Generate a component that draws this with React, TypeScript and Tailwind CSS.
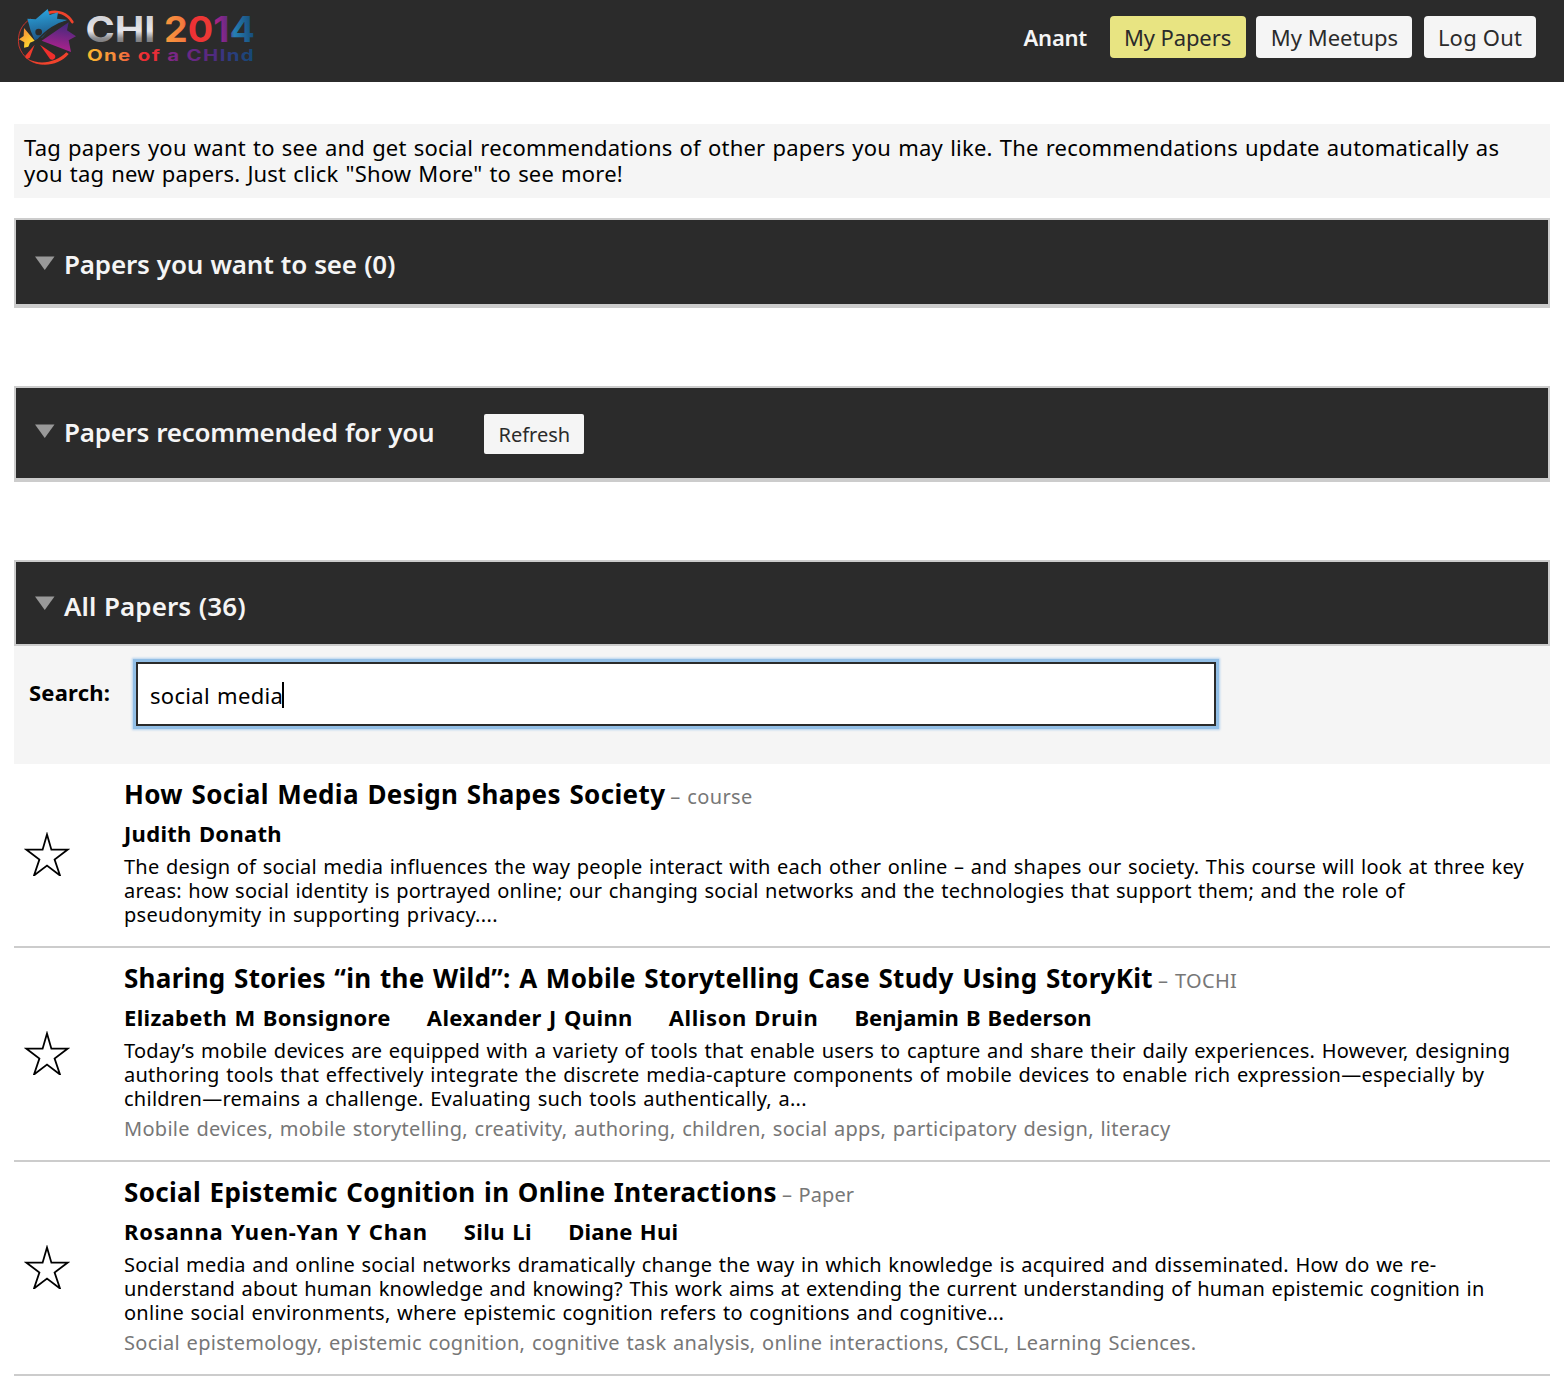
import type { ReactNode } from 'react';

type Line = { text: string; track: string };
type Paper = {
  title: Line;
  kind: Line;
  authors: Line[];
  abstract: Line[];
  keywords?: Line;
};

const papers: Paper[] = [
  {
    title: { text: 'How Social Media Design Shapes Society', track: 'tracking-[0.364px]' },
    kind: { text: '– course', track: 'tracking-[0.35px]' },
    authors: [{ text: 'Judith Donath', track: 'tracking-[0.3px]' }],
    abstract: [
      { text: 'The design of social media influences the way people interact with each other online – and shapes our society. This course will look at three key', track: 'tracking-[0.22px]' },
      { text: 'areas: how social identity is portrayed online; our changing social networks and the technologies that support them; and the role of', track: 'tracking-[0.2px]' },
      { text: 'pseudonymity in supporting privacy....', track: 'tracking-[0.32px]' },
    ],
  },
  {
    title: { text: 'Sharing Stories “in the Wild”: A Mobile Storytelling Case Study Using StoryKit', track: 'tracking-[0.292px]' },
    kind: { text: '– TOCHI', track: 'tracking-[0.35px]' },
    authors: [
      { text: 'Elizabeth M Bonsignore', track: 'tracking-[0.32px]' },
      { text: 'Alexander J Quinn', track: 'tracking-[0.38px]' },
      { text: 'Allison Druin', track: 'tracking-[0.58px]' },
      { text: 'Benjamin B Bederson', track: 'tracking-[0.05px]' },
    ],
    abstract: [
      { text: 'Today’s mobile devices are equipped with a variety of tools that enable users to capture and share their daily experiences. However, designing', track: 'tracking-[0.25px]' },
      { text: 'authoring tools that effectively integrate the discrete media-capture components of mobile devices to enable rich expression—especially by', track: 'tracking-[0.257px]' },
      { text: 'children—remains a challenge. Evaluating such tools authentically, a...', track: 'tracking-[0.26px]' },
    ],
    keywords: { text: 'Mobile devices, mobile storytelling, creativity, authoring, children, social apps, participatory design, literacy', track: 'tracking-[0.292px]' },
  },
  {
    title: { text: 'Social Epistemic Cognition in Online Interactions', track: 'tracking-[0.335px]' },
    kind: { text: '– Paper', track: 'tracking-[0.1px]' },
    authors: [
      { text: 'Rosanna Yuen-Yan Y Chan', track: 'tracking-[0.74px]' },
      { text: 'Silu Li', track: 'tracking-[0.44px]' },
      { text: 'Diane Hui', track: 'tracking-[0.25px]' },
    ],
    abstract: [
      { text: 'Social media and online social networks dramatically change the way in which knowledge is acquired and disseminated. How do we re-', track: 'tracking-[0.216px]' },
      { text: 'understand about human knowledge and knowing? This work aims at extending the current understanding of human epistemic cognition in', track: 'tracking-[0.187px]' },
      { text: 'online social environments, where epistemic cognition refers to cognitions and cognitive...', track: 'tracking-[0.255px]' },
    ],
    keywords: { text: 'Social epistemology, epistemic cognition, cognitive task analysis, online interactions, CSCL, Learning Sciences.', track: 'tracking-[0.298px]' },
  },
];

function Logo() {
  return (
    <svg width="240" height="62" viewBox="0 0 240 62" className="block" role="img" aria-label="CHI 2014 One of a CHInd">
      <defs>
        <linearGradient id="silver" x1="0" y1="0" x2="0" y2="1">
          <stop offset="0.25" stopColor="#d4d4d8" />
          <stop offset="0.55" stopColor="#e6e6ec" />
          <stop offset="0.72" stopColor="#8d8d90" />
          <stop offset="0.85" stopColor="#77777a" />
        </linearGradient>
        <linearGradient id="year" gradientUnits="userSpaceOnUse" x1="149" y1="36" x2="238" y2="28">
          <stop offset="0" stopColor="#f79a3c" />
          <stop offset="0.22" stopColor="#f47b3e" />
          <stop offset="0.3" stopColor="#ee3035" />
          <stop offset="0.52" stopColor="#ec3a35" />
          <stop offset="0.6" stopColor="#a3238a" />
          <stop offset="0.7" stopColor="#6b2a86" />
          <stop offset="0.78" stopColor="#2580b4" />
          <stop offset="1" stopColor="#184a78" />
        </linearGradient>
        <linearGradient id="tagline" gradientUnits="userSpaceOnUse" x1="72" y1="0" x2="238" y2="0">
          <stop offset="0" stopColor="#fcb92f" />
          <stop offset="0.2" stopColor="#f47d3e" />
          <stop offset="0.34" stopColor="#ec2a33" />
          <stop offset="0.44" stopColor="#e22f3a" />
          <stop offset="0.5" stopColor="#7d2788" />
          <stop offset="0.75" stopColor="#54297f" />
          <stop offset="0.84" stopColor="#2f3a80" />
          <stop offset="1" stopColor="#164a76" />
        </linearGradient>
        <linearGradient id="sky" x1="0.4" y1="0" x2="0.6" y2="1">
          <stop offset="0" stopColor="#2ba5de" />
          <stop offset="1" stopColor="#1d4d7c" />
        </linearGradient>
        <linearGradient id="violet" x1="0.6" y1="0" x2="0.4" y2="1">
          <stop offset="0" stopColor="#3f2a7c" />
          <stop offset="1" stopColor="#b5218e" />
        </linearGradient>
        <linearGradient id="sun" x1="0" y1="0" x2="0.7" y2="1">
          <stop offset="0" stopColor="#f47b3a" />
          <stop offset="1" stopColor="#ffe02e" />
        </linearGradient>
      </defs>
      <g transform="translate(-16 -6) scale(0.33333)">
        <path d="M92 57C64 72 50 104 57 138C66 171 97 194 130 192" fill="none" stroke="#c9352c" strokeWidth="3" />
        <path d="M84 178C118 204 176 198 206 162L199 157C170 187 122 196 84 178Z" fill="#f0432c" />
        <path d="M146 38C176 30 202 42 217 66" fill="none" stroke="#f0432c" strokeWidth="8" strokeLinecap="round" />
        <path d="M82 56L107 58L121 46L143 27L149 45L174 37L171 56L204 60C170 72 146 88 128 112L104 121L92 92Z" fill="url(#sky)" />
        <circle cx="116" cy="96" r="10" fill="#2b2b2b" />
        <path d="M206 62C168 72 142 88 110 124" fill="none" stroke="#2b2b2b" strokeWidth="5" />
        <path d="M125 122L206 67L201 91L228 109L206 121L213 156Z" fill="url(#violet)" />
        <path d="M72 84L87 102L104 122L90 128L85 140L72 143L73 127L57 118L71 108Z" fill="url(#sun)" />
        <path d="M104 134L90 172C86 180 74 176 76 167Z" fill="#ef3a2c" />
        <path d="M120 134L164 164C171 173 158 184 150 177Z" fill="#ef2f2c" />
      </g>
      <g className="font-['Inter',sans-serif] font-bold">
        <text x="69.5" y="36" fontSize="35" textLength="70" lengthAdjust="spacingAndGlyphs" fill="url(#silver)">CHI</text>
        <text x="148" y="36" fontSize="35" textLength="91" lengthAdjust="spacingAndGlyphs" fill="url(#year)">2014</text>
        <text x="71" y="55" fontSize="15.5" textLength="168" lengthAdjust="spacingAndGlyphs" className="tracking-[1px]" fill="url(#tagline)">One of a CHInd</text>
      </g>
    </svg>
  );
}

function Triangle({ className }: { className: string }) {
  return (
    <svg width="20" height="14" viewBox="0 0 20 14" className={`shrink-0 ${className}`}>
      <path d="M0 0.5H19.5L9.75 14Z" fill="#999" />
    </svg>
  );
}

function SectionBar({ title, track, className, arrow, children }: { title: string; track: string; className: string; arrow: string; children?: ReactNode }) {
  return (
    <div className={`flex items-start border-2 border-[#ccc] bg-[#2b2b2b] pl-[19px] ${className}`}>
      <Triangle className={arrow} />
      <h2 className={`mt-7 ml-[9px] whitespace-nowrap text-[26px] leading-8 font-semibold text-[#f5f5f5] ${track}`}>{title}</h2>
      {children}
    </div>
  );
}

function Star() {
  return (
    <svg width="46" height="44" viewBox="0 0 46 44" className="mb-0.5 ml-2.5 shrink-0">
      <path d="M23 2.5L27.4 17.7H43.5L30.6 27.5L36 43.5L23 33.6L10 43.5L15.4 27.5L2.5 17.7H18.6Z" fill="none" stroke="#000" strokeWidth="1.8" />
    </svg>
  );
}

function PaperRow({ paper }: { paper: Paper }) {
  return (
    <article className="flex items-center border-b-2 border-[#ccc] pt-3.5 pb-[19px]">
      <div className="-mt-3.5 -mb-[19px] w-[110px] shrink-0">
        <Star />
      </div>
      <div className="whitespace-nowrap text-xl leading-6 [word-spacing:1.1px]">
        <div className="flex h-8 items-baseline gap-[5px] leading-8">
          <h3 className={`text-[26px] font-bold [word-spacing:1.4px] ${paper.title.track}`}>{paper.title.text}</h3>
          <span className={`text-[#777] ${paper.kind.track}`}>{paper.kind.text}</span>
        </div>
        <div className="mt-2.5 flex gap-9 text-[22px] leading-[26px] font-bold [word-spacing:1.2px]">
          {paper.authors.map((a) => (
            <span key={a.text} className={a.track}>{a.text}</span>
          ))}
        </div>
        <div className="mt-[9px]">
          {paper.abstract.map((l) => (
            <p key={l.text} className={l.track}>{l.text}</p>
          ))}
        </div>
        {paper.keywords && <p className={`mt-1.5 text-[#777] ${paper.keywords.track}`}>{paper.keywords.text}</p>}
      </div>
    </article>
  );
}

export default function App() {
  return (
    <div className="h-[1388px] w-[1564px] overflow-hidden bg-white font-['Noto_Sans','Open_Sans',sans-serif] text-black">
      <header className="flex h-[82px] items-start bg-[#2b2b2b] pr-7 text-[22px] leading-[42px]">
        <div className="mt-1.5 ml-4">
          <Logo />
        </div>
        <span className="mt-4 mr-[23px] ml-auto font-semibold tracking-[-0.25px] text-[#f5f5f5]">Anant</span>
        <button className="mt-4 mr-2.5 h-[42px] w-[136px] rounded bg-[#e8e482] pr-px tracking-[-0.1px] text-[#2b2b2b]">My Papers</button>
        <button className="mt-4 mr-3 h-[42px] w-[156px] rounded bg-[#f5f5f5] pl-px text-[#2b2b2b]">My Meetups</button>
        <button className="mt-4 h-[42px] w-28 rounded bg-[#f5f5f5] tracking-[0.2px] text-[#2b2b2b]">Log Out</button>
      </header>

      <main className="mx-3.5 mt-[42px]">
        <div className="h-[74px] whitespace-nowrap bg-[#f5f5f5] pt-2.5 pl-2.5 text-[22px] leading-[26px] [word-spacing:1.2px]">
          <p className="tracking-[0.211px]">Tag papers you want to see and get social recommendations of other papers you may like. The recommendations update automatically as</p>
          <p className="tracking-[0.18px]">you tag new papers. Just click "Show More" to see more!</p>
        </div>

        <SectionBar title="Papers you want to see (0)" track="tracking-[-0.2px] [word-spacing:0.7px]" className="mt-5 h-[90px] border-b-4" arrow="mt-9" />

        <SectionBar title="Papers recommended for you" track="tracking-[-0.28px] [word-spacing:0.7px]" className="mt-[78px] h-24 border-b-4" arrow="mt-9">
          <button className="mt-[26px] ml-[50px] h-10 w-[100px] rounded-xs bg-[#f5f5f5] pt-0.5 text-xl text-[#2b2b2b]">Refresh</button>
        </SectionBar>

        <SectionBar title="All Papers (36)" track="tracking-[0.08px] [word-spacing:0.7px]" className="mt-[78px] h-[86px]" arrow="mt-[34px]" />

        <div className="flex h-[118px] items-start bg-[#f5f5f5] text-[22px]">
          <label className="mt-[33px] ml-[15px] w-[107px] leading-[26px] font-bold tracking-[0.2px]">Search:</label>
          <div className="mt-4 flex h-16 w-[1080px] items-center border-2 border-[#2b2b2b] bg-white pl-3 shadow-[0_0_0_3px_#93bfe6,0_0_2px_4px_#b5d2ee]">
            <span className="mt-0.5 leading-[26px] tracking-[0.3px] [word-spacing:1.2px]">social media</span>
            <span className="mt-0.5 -ml-px h-[26px] w-0.5 bg-black" />
          </div>
        </div>

        {papers.map((p) => (
          <PaperRow key={p.title.text} paper={p} />
        ))}
      </main>
    </div>
  );
}
